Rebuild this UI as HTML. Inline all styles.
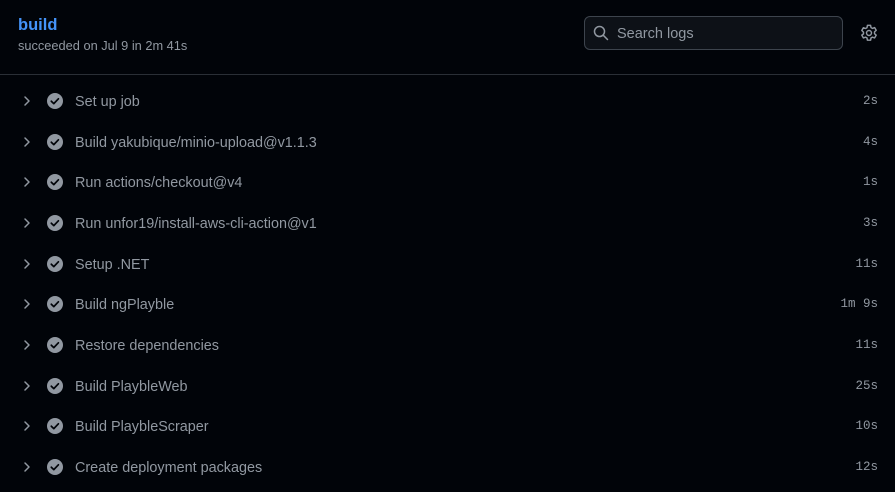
<!DOCTYPE html>
<html><head><style>
body{margin:0;background:#010409;width:895px;height:492px;overflow:hidden;font-family:"Liberation Sans",sans-serif;position:relative}
.t{position:absolute;left:18px;top:16px;color:#4493f8;font-size:16.5px;font-weight:bold}
.s{position:absolute;left:18px;top:38px;color:#9198a1;font-size:12.8px}
.search{position:absolute;left:584px;top:16px;width:259px;height:34px;border:1px solid #3d444d;border-radius:6px;background:#0d1117;box-sizing:border-box}
.search span{position:absolute;left:32px;top:9px;color:#9198a1;font-size:14.5px}
.hr{position:absolute;left:0;top:74px;width:895px;height:1px;background:#2a2f36}
.row{position:absolute;left:0;width:895px;height:40px}
.row .n{position:absolute;left:75px;top:13px;color:#9198a1;font-size:14.4px;white-space:nowrap}
.row .d{position:absolute;right:17px;top:13px;color:#9198a1;font-size:12.5px;font-family:"Liberation Mono",monospace}
.row svg{position:absolute}
</style></head><body>
<div class="t">build</div>
<div class="s">succeeded on Jul 9 in 2m 41s</div>
<div class="search"><svg width="16" height="16" viewBox="0 0 16 16" style="position:absolute;left:8px;top:8px"><circle cx="6.5" cy="6.5" r="5" fill="none" stroke="#9198a1" stroke-width="1.5"/><path d="M10.2 10.2L14.5 14.5" stroke="#9198a1" stroke-width="1.5" stroke-linecap="round"/></svg><span>Search logs</span></div>
<svg width="18" height="18" viewBox="0 0 16 16" style="position:absolute;left:860px;top:24px"><path d="M6.6 1.2h2.8l.4 2 1.3.7 1.9-.7 1.4 2.4-1.5 1.4v1.6l1.5 1.3-1.4 2.5-1.9-.7-1.3.7-.4 2H6.6l-.4-2-1.3-.7-1.9.7-1.4-2.5L3.1 8.8V7.2L1.6 5.8 3 3.3l1.9.7 1.3-.7z" fill="none" stroke="#9198a1" stroke-width="1.3" stroke-linejoin="round"/><circle cx="8" cy="8" r="2.2" fill="none" stroke="#9198a1" stroke-width="1.3"/></svg>
<div class="hr"></div>
<div id="rows"></div>
<script>
var d=[["Set up job","2s"],["Build yakubique/minio-upload@v1.1.3","4s"],["Run actions/checkout@v4","1s"],["Run unfor19/install-aws-cli-action@v1","3s"],["Setup .NET","11s"],["Build ngPlayble","1m 9s"],["Restore dependencies","11s"],["Build PlaybleWeb","25s"],["Build PlaybleScraper","10s"],["Create deployment packages","12s"]];
var h="";
d.forEach(function(r,i){var y=Math.round(81+i*40.67);
h+='<div class="row" style="top:'+y+'px"><svg width="10" height="12" style="left:22px;top:14px" viewBox="0 0 10 12"><path d="M3 2l4 4-4 4" fill="none" stroke="#9198a1" stroke-width="1.5" stroke-linecap="round" stroke-linejoin="round"/></svg><svg width="18" height="18" style="left:46px;top:11px" viewBox="0 0 18 18"><circle cx="9" cy="9" r="8" fill="#9198a1"/><path d="M5.3 9.2l2.5 2.4 4.6-4.8" fill="none" stroke="#010409" stroke-width="1.7" stroke-linecap="round" stroke-linejoin="round"/></svg><span class="n">'+r[0]+'</span><span class="d">'+r[1]+'</span></div>';});
document.getElementById("rows").innerHTML=h;
</script>
</body></html>
